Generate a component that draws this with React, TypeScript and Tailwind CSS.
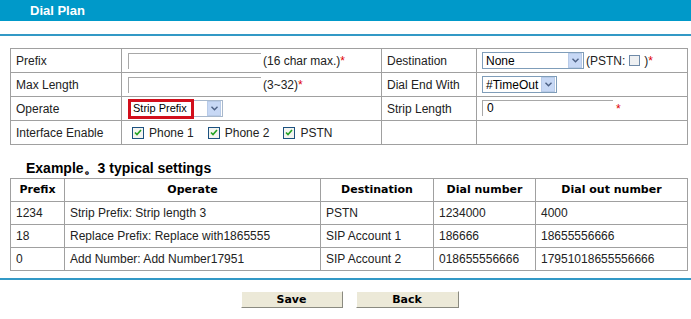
import React from 'react';

const font = { fontFamily: '"Liberation Sans", Arial, sans-serif' };
const verdana = { fontFamily: '"DejaVu Sans", Verdana, sans-serif' };

function Arrow() {
  return (
    <span className="flex h-[15px] w-[14px] items-center justify-center border border-[#b8cbe8] bg-[#c7d8f5]">
      <svg width="7" height="5" viewBox="0 0 7 5">
        <path d="M0.5 0.8 L3.5 3.8 L6.5 0.8" fill="none" stroke="#4d6185" strokeWidth="1.4" />
      </svg>
    </span>
  );
}

function Select({ value, width }: { value: string; width: string }) {
  return (
    <div className={`flex h-[17px] items-center justify-between border border-[#7f9db9] bg-white pl-[3px] pr-[1px] ${width}`}>
      <span className="whitespace-nowrap text-[12px] text-black">{value}</span>
      <Arrow />
    </div>
  );
}

function Input({ width, value }: { width: string; value?: string }) {
  return (
    <div className={`h-[16px] border-l border-t border-[#a8a8a8] bg-white pl-[4px] text-[12px] leading-[15px] text-black ${width}`}>
      {value}
    </div>
  );
}

function Check({ label }: { label: string }) {
  return (
    <span className="flex items-center gap-[5px]">
      <span className="flex h-[12px] w-[12px] items-center justify-center border border-[#1c5180] bg-[#f4f4f0]">
        <svg width="8" height="7" viewBox="0 0 8 7">
          <path d="M1 3.5 L3 5.5 L7 1" fill="none" stroke="#21a121" strokeWidth="1.6" />
        </svg>
      </span>
      <span>{label}</span>
    </span>
  );
}

const Star = () => <span className="text-[#e00000]">*</span>;

const examples = [
  ['1234', 'Strip Prefix: Strip length 3', 'PSTN', '1234000', '4000'],
  ['18', 'Replace Prefix: Replace with1865555', 'SIP Account 1', '186666', '18655556666'],
  ['0', 'Add Number: Add Number17951', 'SIP Account 2', '018655556666', '17951018655556666'],
];

export default function App() {
  const td = 'border border-[#a0a0a0] px-[5px] h-[24px] align-middle';
  const xd = 'border border-[#a0a0a0] px-[5px] h-[23px] align-middle';
  return (
    <div className="h-[319px] w-[691px] bg-white text-[12px] text-[#222]" style={font}>
      {/* Titre */}
      <div className="flex h-[21px] items-center bg-[#0099c9] pl-[30px] text-[13px] font-bold text-white">
        Dial Plan
      </div>
      <div className="mt-[13px] h-[2px] bg-[#3399c6]" />

      {/* Formulaire */}
      <div className="px-[10px] pt-[12px]">
        <table className="w-[677px] table-fixed border-collapse">
          <colgroup>
            <col className="w-[111px]" />
            <col className="w-[260px]" />
            <col className="w-[95px]" />
            <col className="w-[211px]" />
          </colgroup>
          <tbody>
            <tr>
              <td className={td}>Prefix</td>
              <td className={td}>
                <div className="flex items-center gap-[2px] pl-[1px]">
                  <Input width="w-[133px]" />
                  <span>(16 char max.)<Star /></span>
                </div>
              </td>
              <td className={td}>Destination</td>
              <td className={td}>
                <div className="flex items-center gap-[2px]">
                  <Select value="None" width="w-[102px]" />
                  <span className="flex items-center">
                    (PSTN:
                    <span className="mx-[4px] inline-block h-[11px] w-[11px] border border-[#6f8aa8] bg-[#eef0f2]" />
                    )<Star />
                  </span>
                </div>
              </td>
            </tr>
            <tr>
              <td className={td}>Max Length</td>
              <td className={td}>
                <div className="flex items-center gap-[2px] pl-[1px]">
                  <Input width="w-[133px]" />
                  <span>(3~32)<Star /></span>
                </div>
              </td>
              <td className={td}>Dial End With</td>
              <td className={td}>
                <Select value="#TimeOut" width="w-[75px]" />
              </td>
            </tr>
            <tr>
              <td className={td}>Operate</td>
              <td className={td}>
                <div className="flex h-[20px] w-[96px] items-center pl-[1px]">
                  <div className="flex h-[20px] w-[66px] shrink-0 items-center whitespace-nowrap border-[3px] border-[#d20f1c] pl-[2px] text-[11px] text-black">
                    Strip Prefix
                  </div>
                  <div className="flex h-[17px] flex-1 items-center justify-end border-y border-r border-[#a8b8cc] pr-[1px]">
                    <Arrow />
                  </div>
                </div>
              </td>
              <td className={td}>Strip Length</td>
              <td className={td}>
                <div className="flex items-start gap-[3px]">
                  <Input width="w-[131px]" value="0" />
                  <Star />
                </div>
              </td>
            </tr>
            <tr>
              <td className={td}>Interface Enable</td>
              <td className={td}>
                <div className="flex items-center gap-[14px] pl-[5px]">
                  <Check label="Phone 1" />
                  <Check label="Phone 2" />
                  <Check label="PSTN" />
                </div>
              </td>
              <td className={td}></td>
              <td className={td}></td>
            </tr>
          </tbody>
        </table>

        {/* Exemple */}
        <div className="pl-[16px] pt-[15px] text-[14px] font-bold leading-[16px] text-black">
          Example。3 typical settings
        </div>
        <table className="mt-[2px] w-[677px] table-fixed border-collapse">
          <colgroup>
            <col className="w-[54px]" />
            <col className="w-[256px]" />
            <col className="w-[113px]" />
            <col className="w-[102px]" />
            <col className="w-[152px]" />
          </colgroup>
          <thead>
            <tr className="text-[11px] font-bold text-black" style={verdana}>
              <th className={xd}>Prefix</th>
              <th className={xd}>Operate</th>
              <th className={xd}>Destination</th>
              <th className={xd}>Dial number</th>
              <th className={xd}>Dial out number</th>
            </tr>
          </thead>
          <tbody>
            {examples.map((row) => (
              <tr key={row[0]}>
                {row.map((c, i) => (
                  <td key={i} className={xd}>{c}</td>
                ))}
              </tr>
            ))}
          </tbody>
        </table>
      </div>

      <div className="mt-[7px] h-[2px] bg-[#3399c6]" />

      {/* Actions */}
      <div className="flex justify-center gap-[13px] pl-[8px] pt-[11px]">
        <button className="h-[17px] w-[102px] border border-b-[#8a8a80] border-l-white border-r-[#8a8a80] border-t-white bg-[#ece9d8] text-[11px] font-bold text-black" style={verdana}>
          Save
        </button>
        <button className="h-[17px] w-[103px] border border-b-[#8a8a80] border-l-white border-r-[#8a8a80] border-t-white bg-[#ece9d8] text-[11px] font-bold text-black" style={verdana}>
          Back
        </button>
      </div>
    </div>
  );
}
